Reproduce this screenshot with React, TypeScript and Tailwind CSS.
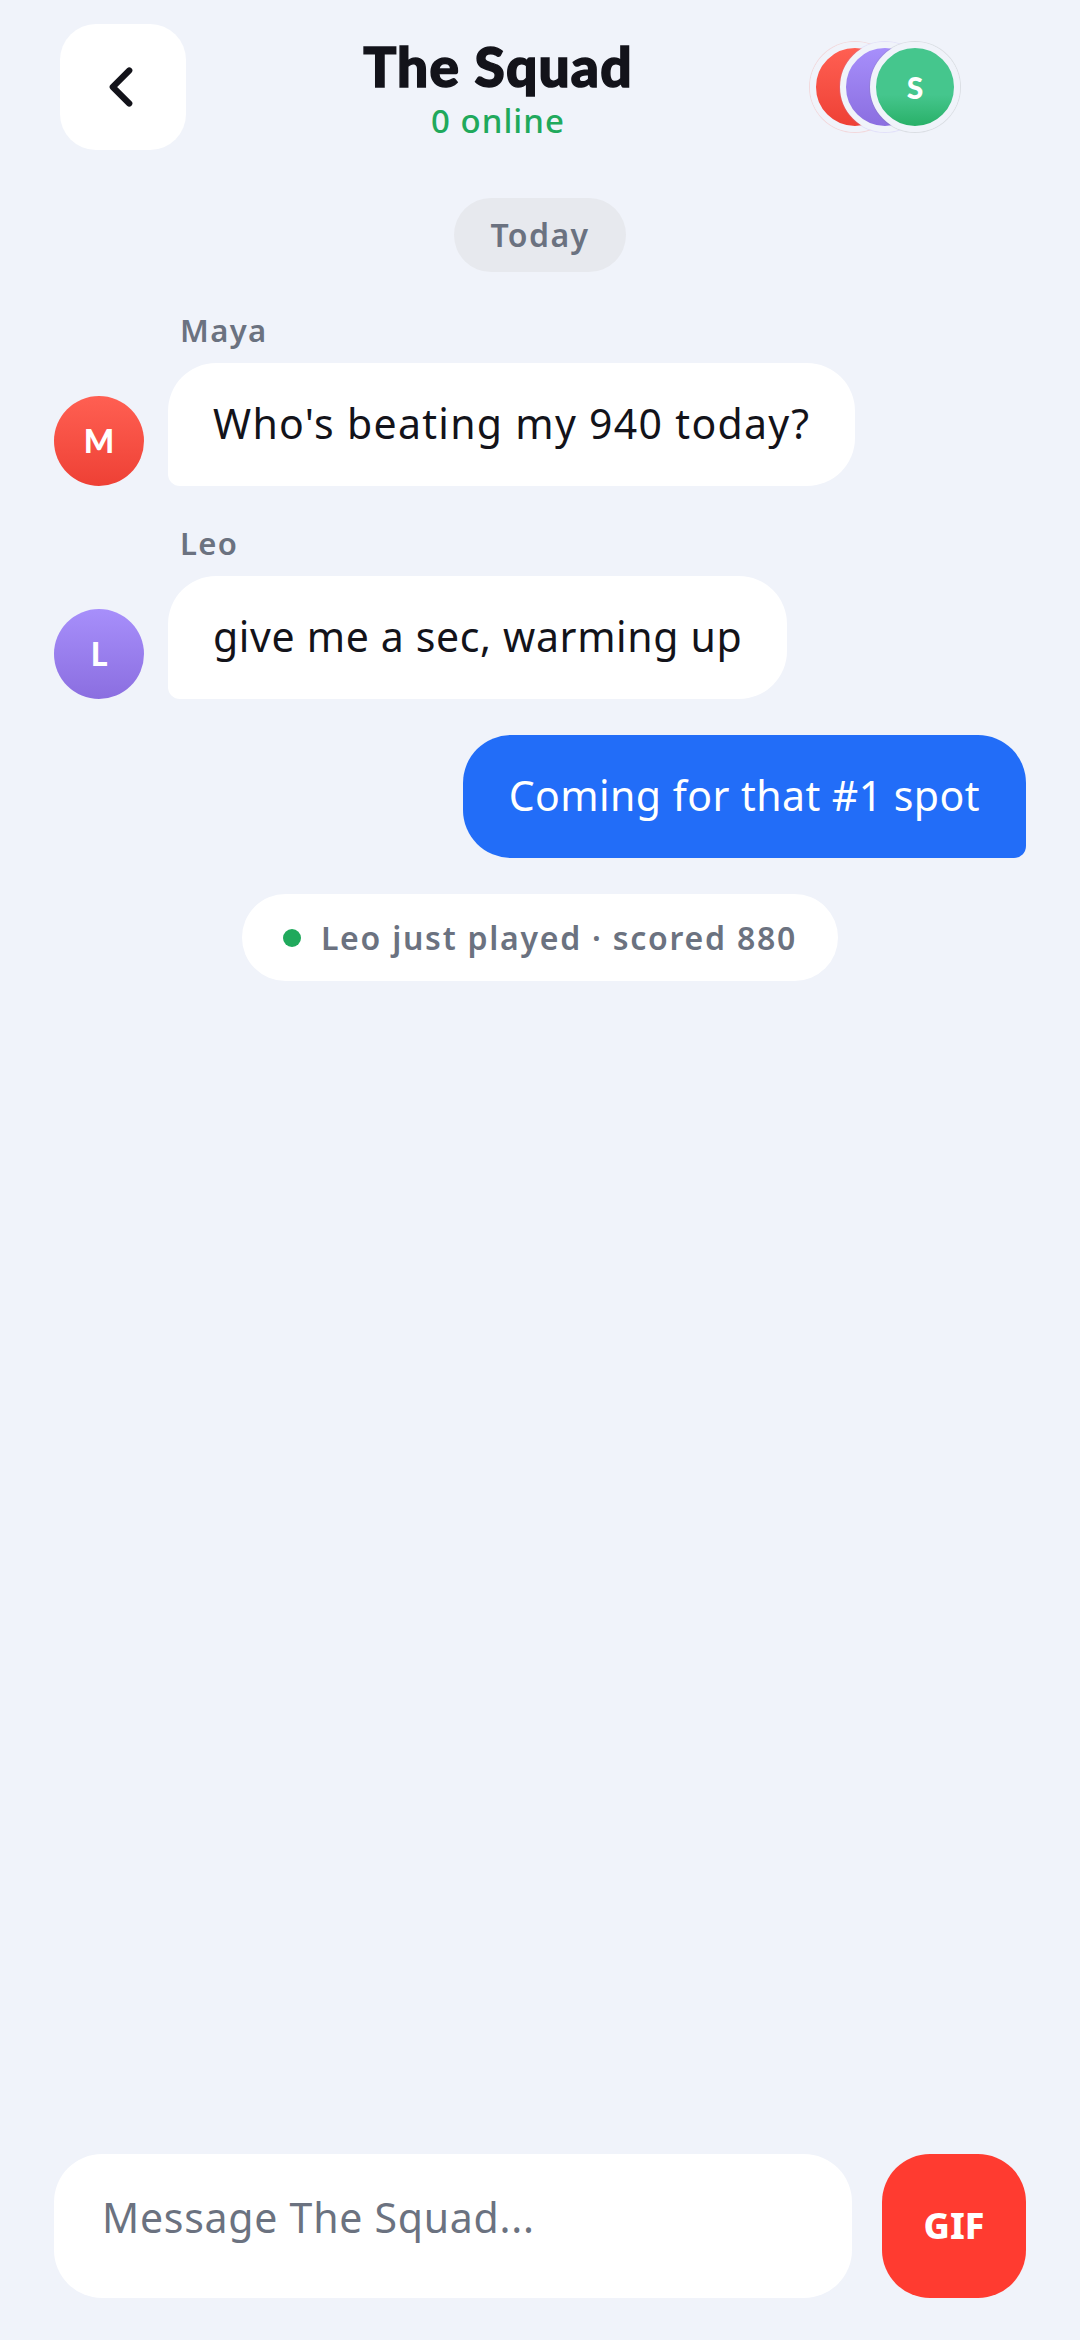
import { ChevronLeft } from 'lucide-react';

const BODY = "font-['Noto_Sans',sans-serif]";

function Avatar({ letter, color }: { letter: string; color: string }) {
  return (
    <div className={`w-[90px] h-[90px] rounded-full flex items-center justify-center shrink-0 ${color}`}>
      <span className="text-white text-[32px] font-black font-['Lato',sans-serif]">{letter}</span>
    </div>
  );
}

function Incoming({ name, text, letter, color, spacing }: { name: string; text: string; letter: string; color: string; spacing: string }) {
  return (
    <div className="flex flex-col">
      <div className="pl-[126px] mb-[15px] h-[36px] text-[31px] leading-[36px] font-semibold text-[#6b7280] tracking-[1.4px]">{name}</div>
      <div className="flex items-end gap-[24px]">
        <Avatar letter={letter} color={color} />
        <div className={`h-[123px] flex items-center px-[45px] pb-[2px] bg-white rounded-[48px] rounded-bl-[12px] text-[41px] text-[#13131a] ${spacing}`}>
          {text}
        </div>
      </div>
    </div>
  );
}

export default function App() {
  const stack = [
    { id: 'm', letter: '', color: 'bg-gradient-to-b from-[#ff5f52] to-[#ee4035] shadow-[0_0_0_1px_rgba(255,95,82,0.18)]' },
    { id: 'l', letter: '', color: 'bg-gradient-to-b from-[#a78ffb] to-[#8b6ee0] shadow-[0_0_0_1px_rgba(167,143,251,0.18)]' },
    { id: 's', letter: 'S', color: 'bg-gradient-to-b from-[#45c68d] from-60% to-[#28b068] shadow-[0_0_0_1px_rgba(120,130,130,0.18)]' }
  ];

  return (
    <div className={`w-[1080px] h-[2340px] bg-[#f0f3fa] flex flex-col ${BODY}`}>
      <header className="flex items-start justify-between pl-[60px] pr-[120px] pt-[24px] h-[198px] shrink-0">
        <button className="w-[126px] h-[126px] bg-white rounded-[36px] flex items-center justify-center">
          <ChevronLeft className="w-[66px] h-[66px] text-[#13131a] -ml-[4px]" strokeWidth={2.25} />
        </button>
        <div className="flex flex-col items-center pt-[11px]">
          <h1 className="text-[55px] leading-[62px] font-black text-[#13131a] font-['Lato',sans-serif] tracking-[1.2px] [-webkit-text-stroke:1.5px_#13131a]">The Squad</h1>
          <p className="text-[33px] leading-[42px] mt-[3px] font-medium text-[#20a95c] tracking-[1px]">0 online</p>
        </div>
        <div className="flex pt-[18px]">
          {stack.map((a, i) => (
            <div
              key={a.id}
              className={`w-[90px] h-[90px] rounded-full border-[6px] border-[#f0f3fa] flex items-center justify-center ${i > 0 ? '-ml-[60px]' : ''} ${a.color}`}
            >
              <span className="text-white text-[30px] font-black font-['Lato',sans-serif]">{a.letter}</span>
            </div>
          ))}
        </div>
      </header>

      <main className="flex-1 flex flex-col px-[54px]">
        <div className="flex justify-center mb-[40px]">
          <span className="h-[74px] px-[36px] flex items-center rounded-full bg-[#e7e9ee] text-[32px] font-semibold text-[#6b7280] tracking-[1.4px]">
            Today
          </span>
        </div>
        <div className="flex flex-col gap-[39px]">
          <Incoming name="Maya" letter="M" text="Who's beating my 940 today?" spacing="tracking-[1.3px]" color="bg-gradient-to-b from-[#ff5f52] to-[#ee4035]" />
          <Incoming name="Leo" letter="L" text="give me a sec, warming up" spacing="tracking-[0.65px]" color="bg-gradient-to-b from-[#a78ffb] to-[#8b6ee0]" />
        </div>
        <div className="flex justify-end mt-[36px]">
          <div className="h-[123px] flex items-center px-[46px] pb-[2px] bg-[#226df8] rounded-[48px] rounded-br-[12px] text-[41px] text-white tracking-[0.45px]">
            Coming for that #1 spot
          </div>
        </div>
        <div className="flex justify-center mt-[36px]">
          <div className="h-[87px] flex items-center gap-[20px] px-[41px] bg-white rounded-full text-[32px] font-semibold text-[#6b7280] tracking-[1.75px]">
            <span className="w-[18px] h-[18px] rounded-full bg-[#20a95c]"></span>
            Leo just played · scored 880
          </div>
        </div>
      </main>

      <footer className="flex gap-[30px] pl-[54px] pr-[54px] pb-[42px] shrink-0">
        <div className="flex-1 h-[144px] bg-white rounded-[48px] flex items-center pl-[48px] pb-[17px] text-[41px] text-[#6b7280] tracking-[0.75px]">
          Message The Squad...
        </div>
        <button className="w-[144px] h-[144px] rounded-[48px] bg-[#ff3b30] text-white text-[36px] font-extrabold">GIF</button>
      </footer>
    </div>
  );
}
